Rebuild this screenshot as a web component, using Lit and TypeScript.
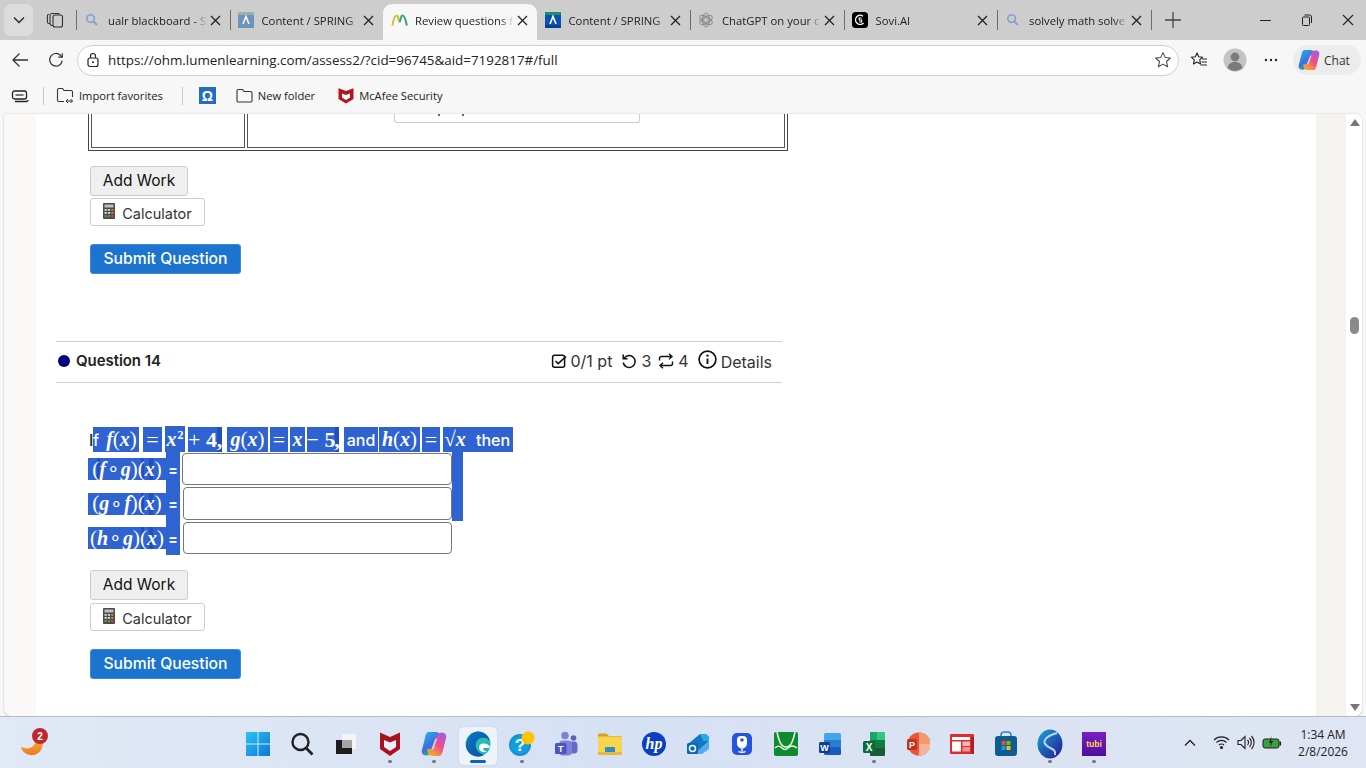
import { LitElement, html, css } from "lit";
import { customElement } from "lit/decorators.js";

const ico = {
  search: html`<svg width="14" height="14" viewBox="0 0 14 14" fill="none"><circle cx="5.6" cy="5.6" r="3.8" stroke="#7f9fd6" stroke-width="1.6"/><path d="M8.5 8.5L12 12" stroke="#7f9fd6" stroke-width="1.8"/></svg>`,
  lumenPale: html`<svg width="16" height="16" viewBox="0 0 16 16"><rect width="16" height="16" fill="#6d94bf"/><rect x="0" y="0" width="16" height="3" fill="#93b5a8"/><path d="M5 12L8 4.5 11 12" stroke="#fff" stroke-width="1.5" fill="none"/></svg>`,
  lumenDark: html`<svg width="16" height="16" viewBox="0 0 16 16"><rect width="16" height="16" fill="#0b50b5"/><rect width="16" height="3" fill="#1f8c72"/><rect y="13" width="16" height="3" fill="#0a3f96"/><path d="M5 12L8 4.5 11 12" stroke="#fff" stroke-width="1.6" fill="none"/></svg>`,
  lumenM: html`<svg width="17" height="13" viewBox="0 0 17 13" fill="none"><path d="M1.5 11.5C2.5 4 4.5 1.5 6 1.5S7.5 8 8.5 8" stroke="#c9c63a" stroke-width="2"/><path d="M8.5 8C9.5 8 9.5 1.5 11.5 1.5S14.8 6 15.8 11.5" stroke="#2fa56d" stroke-width="2"/></svg>`,
  gpt: html`<svg width="16" height="16" viewBox="0 0 16 16" fill="none" stroke="#8c8c8c" stroke-width="1"><circle cx="8" cy="8" r="2.4"/><ellipse cx="8" cy="8" rx="3.5" ry="7"/><ellipse cx="8" cy="8" rx="3.5" ry="7" transform="rotate(60 8 8)"/><ellipse cx="8" cy="8" rx="3.5" ry="7" transform="rotate(120 8 8)"/></svg>`,
  sovi: html`<svg width="16" height="16" viewBox="0 0 16 16" fill="none"><rect width="16" height="16" rx="3.5" fill="#000"/><path d="M11 4.2A4.6 4.6 0 1 0 11.5 11" stroke="#fff" stroke-width="1.4"/><path d="M9.6 6H7.2v2h2.4v2H7" stroke="#fff" stroke-width="1.1"/></svg>`,
  close: html`<svg width="11" height="11" viewBox="0 0 11 11" fill="none"><path d="M1 1l9 9M10 1l-9 9" stroke="#222" stroke-width="1.3"/></svg>`,
  chevron: html`<svg width="12" height="8" viewBox="0 0 12 8" fill="none"><path d="M1 1.5l5 5 5-5" stroke="#222" stroke-width="1.3"/></svg>`,
  workspaces: html`<svg width="18" height="18" viewBox="0 0 18 18" fill="none" stroke="#333" stroke-width="1.1"><rect x="7" y="4" width="9.5" height="12" rx="2"/><path d="M7 14.5H5.8a1.8 1.8 0 0 1-1.8-1.8V4.5a2 2 0 0 1 2-2h6a2 2 0 0 1 1.7 1"/><path d="M4 12.5H3a1.6 1.6 0 0 1-1.6-1.6V5a2 2 0 0 1 1.4-2"/></svg>`,
  back: html`<svg width="18" height="16" viewBox="0 0 18 16" fill="none"><path d="M17 8H2M8.5 1.5L2 8l6.5 6.5" stroke="#333" stroke-width="1.3"/></svg>`,
  reload: html`<svg width="16" height="16" viewBox="0 0 16 16" fill="none"><path d="M14.2 8.6A6.3 6.3 0 1 1 12.4 3.3L14 5" stroke="#333" stroke-width="1.2"/><path d="M14.3 1.2V5.2H10.3" stroke="#333" stroke-width="1.2"/></svg>`,
  lock: html`<svg width="14" height="16" viewBox="0 0 14 16" fill="none"><rect x="2" y="6" width="10" height="8.5" rx="2" stroke="#222" stroke-width="1.2"/><path d="M4.5 6V4a2.5 2.5 0 0 1 5 0v2" stroke="#222" stroke-width="1.2"/><circle cx="7" cy="10.2" r="1" fill="#222"/></svg>`,
  star: html`<svg width="18" height="18" viewBox="0 0 18 18" fill="none"><path d="M9 1.6l2.2 4.8 5.2.6-3.9 3.5 1.1 5.2L9 13.1l-4.6 2.6 1.1-5.2L1.6 7l5.2-.6z" stroke="#444" stroke-width="1.05" stroke-linejoin="round"/></svg>`,
  favs: html`<svg width="18" height="18" viewBox="0 0 18 18" fill="none"><path d="M7 2l1.7 3.7 4 .5-3 2.7.8 4L7 11l-3.5 1.9.8-4-3-2.7 4-.5z" stroke="#222" stroke-width="1.1" stroke-linejoin="round"/><path d="M12 8h5M11.5 11h5.5M10.5 14h6.5" stroke="#222" stroke-width="1.1"/></svg>`,
  avatar: html`<svg width="24" height="24" viewBox="0 0 24 24"><circle cx="12" cy="12" r="11.5" fill="#c4c4c4"/><circle cx="12" cy="9" r="4.4" fill="#7b7b7b"/><path d="M4.5 20c1-4.6 4-6 7.5-6s6.5 1.4 7.5 6a11 11 0 0 1-15 0z" fill="#7b7b7b"/></svg>`,
  more: html`<svg width="14" height="4" viewBox="0 0 14 4"><circle cx="2" cy="2" r="1.2" fill="#222"/><circle cx="7" cy="2" r="1.2" fill="#222"/><circle cx="12" cy="2" r="1.2" fill="#222"/></svg>`,
  reading: html`<svg width="18" height="14" viewBox="0 0 18 14" fill="none"><rect x="1.5" y="2" width="14" height="8" rx="2" stroke="#222" stroke-width="1.3"/><path d="M4 12.5h11.5a1.5 1.5 0 0 0 1.5-1.5" stroke="#222" stroke-width="1.3"/><path d="M4.5 6h8" stroke="#222" stroke-width="1.2"/></svg>`,
  importFav: html`<svg width="18" height="17" viewBox="0 0 18 17" fill="none"><path d="M8 14.5H3A1.5 1.5 0 0 1 1.5 13V3A1.5 1.5 0 0 1 3 1.5h3.5L8 3.5h7A1.5 1.5 0 0 1 16.5 5v5" stroke="#333" stroke-width="1.1"/><path d="M10 14h6.5M12 12l-2 2 2 2M14.5 12l2 2-2 2" stroke="#333" stroke-width="1"/></svg>`,
  omega: html`<div class="omega">Ω</div>`,
  folder: html`<svg width="17" height="15" viewBox="0 0 17 15" fill="none"><path d="M1 3A1.5 1.5 0 0 1 2.5 1.5h4L8 3.5h6.5A1.5 1.5 0 0 1 16 5v7.5a1.5 1.5 0 0 1-1.5 1.5h-12A1.5 1.5 0 0 1 1 12.5z" stroke="#333" stroke-width="1.1"/></svg>`,
  mcafee: html`<svg width="16" height="17" viewBox="0 0 16 17"><path d="M0.5 1.2L8 4 15.5 1.2V12L8 16.5 0.5 12z" fill="#b3141d"/><path d="M4 6.5L8 8l4-1.5v4L8 13l-4-2.500z" fill="#fff"/></svg>`,
  check: html`<svg width="16" height="16" viewBox="0 0 16 16" fill="none"><rect x="1.6" y="2.2" width="12" height="12" rx="2" stroke="#111" stroke-width="1.5"/><path d="M4.500 8l2.700 2.700L15 3.500" stroke="#111" stroke-width="1.6"/></svg>`,
  undo: html`<svg width="16" height="16" viewBox="0 0 16 16" fill="none"><path d="M3 5.300A6 6 0 1 1 2.200 9.500" stroke="#111" stroke-width="1.5"/><path d="M2.200 1.500V5.800H6.500" stroke="#111" stroke-width="1.5"/></svg>`,
  retry: html`<svg width="16" height="16" viewBox="0 0 16 16" fill="none"><path d="M1.500 7.500V5.500A2 2 0 0 1 3.500 3.500H14M11 .8L14 3.500 11 6.200" stroke="#111" stroke-width="1.4"/><path d="M14.500 8.500v2a2 2 0 0 1-2 2H2M5 9.800L2 12.500l3 2.700" stroke="#111" stroke-width="1.4"/></svg>`,
  info: html`<svg width="19" height="19" viewBox="0 0 19 19" fill="none"><circle cx="9.500" cy="9.500" r="8.400" stroke="#111" stroke-width="1.7"/><circle cx="9.500" cy="5.600" r="1.200" fill="#111"/><path d="M9.500 8.500v5.500" stroke="#111" stroke-width="1.900"/></svg>`,
  calc: html`<svg width="12" height="16" viewBox="0 0 12 16"><rect width="12" height="16" rx="1" fill="#4a4a4a"/><rect x="1.500" y="1.500" width="9" height="3" fill="#b9c2c0"/><g fill="#d8d8d8"><rect x="1.500" y="6" width="2.300" height="1.800"/><rect x="4.800" y="6" width="2.300" height="1.800"/></g><rect x="8.200" y="6" width="2.300" height="1.800" fill="#d9822b"/><g fill="#d8d8d8"><rect x="1.500" y="9" width="2.300" height="1.800"/><rect x="4.800" y="9" width="2.300" height="1.800"/></g><rect x="8.200" y="9" width="2.300" height="1.800" fill="#d9822b"/><g fill="#4d9a5b"><rect x="1.500" y="12" width="2.300" height="2.300"/><rect x="4.800" y="12" width="2.300" height="2.300"/></g><rect x="8.200" y="12" width="2.300" height="2.300" fill="#c64a2b"/></svg>`,
};

const copilot = (s: number) => html`<svg width=${s} height=${s} viewBox="0 0 24 24"><defs><linearGradient id="cpa${s}" x1="0" y1="0" x2=".6" y2="1"><stop offset="0" stop-color="#2bb5ea"/><stop offset=".6" stop-color="#3a6fe0"/><stop offset="1" stop-color="#35c07a"/></linearGradient><linearGradient id="cpb${s}" x1=".2" y1="1" x2=".8" y2="0"><stop offset="0" stop-color="#f7b21f"/><stop offset=".5" stop-color="#ee4f86"/><stop offset="1" stop-color="#a25be0"/></linearGradient></defs><path d="M7 1h7c1.500 0 2.500.8 3 2l1.500 4.500h-5L9.500 19c-.6 2-2 3.500-4 3.500H4.500C1.500 22.500 0 20 1 17L4 5C4.600 2.500 5.500 1 7 1z" fill="url(#cpa${s})"/><path d="M17 23h-7c-1.500 0-2.500-.8-3-2l-1.500-4.500h5L14.500 5c.6-2 2-3.500 4-3.500h1C22.500 1.500 24 4 23 7L20 19c-.6 2.500-1.500 4-3 4z" fill="url(#cpb${s})"/><path d="M9.500 17l3.500-10h2L11.500 17z" fill="#fff" opacity=".55"/></svg>`;

const bar = {
  moon: html`<svg width="26" height="28" viewBox="0 0 26 28"><defs><linearGradient id="mo" x1="0" y1="0" x2="0" y2="1"><stop offset="0" stop-color="#f8c54a"/><stop offset="1" stop-color="#ec7a1c"/></linearGradient></defs><path d="M18 5c6 2 7 9 5 14-2 5-7 8-12 7-5-1-8-4-9-8 5 2 9 2 12-1 3-3 4-7 4-12z" fill="url(#mo)"/></svg>`,
  win: html`<svg width="24" height="24" viewBox="0 0 24 24"><defs><linearGradient id="wi" x1="0" y1="0" x2="1" y2="1"><stop offset="0" stop-color="#29c3f4"/><stop offset="1" stop-color="#0a78d4"/></linearGradient></defs><path d="M0 0h11.500v11.500H0zM12.500 0H24v11.500H12.500zM0 12.500h11.500V24H0zM12.500 12.500H24V24H12.500z" fill="url(#wi)"/></svg>`,
  search: html`<svg width="24" height="24" viewBox="0 0 24 24" fill="none"><circle cx="10.500" cy="10" r="8" stroke="#222" stroke-width="2.400"/><path d="M16 16l6.500 6.500" stroke="#222" stroke-width="2.800"/></svg>`,
  task: html`<svg width="24" height="24" viewBox="0 0 24 24"><rect x="8" y="2" width="14" height="15" fill="#f4f4f4"/><rect x="2" y="8" width="16" height="14" fill="#1c1c1c"/><rect x="8" y="8" width="10" height="8" fill="#a5a5a5"/></svg>`,
  mcafee: html`<svg width="22" height="26" viewBox="0 0 22 26"><path d="M1 1.500L11 6 21 1.500V18L11 25 1 18z" fill="#a6141c"/><path d="M5 9L11 11.500 17 9v7L11 20 5 16z" fill="#eef"/></svg>`,
  copilot: copilot(26),
  edge: html`<svg width="26" height="26" viewBox="0 0 26 26"><defs><linearGradient id="ed1" x1="0" y1="0" x2="1" y2="1"><stop offset="0" stop-color="#3fd28b"/><stop offset="1" stop-color="#1aa9c9"/></linearGradient><linearGradient id="ed2" x1="0" y1="0" x2="1" y2="1"><stop offset="0" stop-color="#0c75c7"/><stop offset="1" stop-color="#0a4ea3"/></linearGradient></defs><circle cx="13" cy="13" r="12.500" fill="url(#ed1)"/><path d="M1 13C2 5 8 .5 13 .5c6 0 11 4.500 12 9.500-2-3-6-4-9-3-5 1.500-7 7-4 12 1.500 2.500 4 4 7 5-1 .8-4 1.500-6 1.500C6 25.500 .5 20 1 13z" fill="url(#ed2)"/><path d="M14 16.500c0-2.500 2-4 4.500-4s6 1.500 6.500 3.500c0 .8-2 1-3 1h-3.500c-1 1.500 1 3 3.500 3.500-2.500 1.500-8 .5-8-4z" fill="#fff"/></svg>`,
  help: html`<svg width="28" height="26" viewBox="0 0 28 26"><circle cx="12" cy="14" r="11" fill="#1591cf"/><circle cx="12" cy="14" r="9" fill="#11a0dc"/><text x="12" y="20" text-anchor="middle" font-family="Liberation Sans" font-weight="700" font-size="17" fill="#fff">?</text><circle cx="20" cy="7" r="6.500" fill="#fdc300"/></svg>`,
  teams: html`<svg width="24" height="26" viewBox="0 0 24 26"><circle cx="11" cy="4.500" r="3.800" fill="#7b83d8"/><circle cx="19.500" cy="7" r="2.800" fill="#5b62b8"/><rect x="15" y="10.500" width="8.500" height="12" rx="3.500" fill="#6369c4"/><rect x="5" y="9.500" width="13" height="15" rx="4" fill="#7b83d8"/><rect x="1" y="12" width="11.500" height="11" rx="1.500" fill="#4b53bc"/><text x="6.700" y="21" text-anchor="middle" font-family="Liberation Sans" font-weight="700" font-size="9" fill="#fff">T</text></svg>`,
  folder: html`<svg width="26" height="24" viewBox="0 0 26 24"><path d="M1 3a1.500 1.500 0 0 1 1.500-1.500h7L12 4h12.500v2H1z" fill="#d59f1e"/><rect x="1" y="4.500" width="24" height="18.500" fill="#f7d44e"/><rect x="8" y="15" width="10" height="6" rx="1" fill="#2a8fc9"/><rect x="1" y="20" width="24" height="3" fill="#e8b938"/></svg>`,
  hp: html`<svg width="24" height="24" viewBox="0 0 24 24"><circle cx="12" cy="12" r="12" fill="#0a3fc0"/><text x="12" y="17" text-anchor="middle" font-family="Liberation Serif" font-style="italic" font-weight="700" font-size="16" fill="#fff">hp</text></svg>`,
  outlook: html`<svg width="24" height="24" viewBox="0 0 24 24"><path d="M2 12L14 2h6l3 3v4L11 20z" fill="#1576c4"/><path d="M11 20l12-11v8l-7 5h-5z" fill="#4fb0e8"/><path d="M14 2h6l3 3v4h-6z" fill="#28a8ea"/><rect x="1" y="11" width="11" height="11" rx="1.500" fill="#0a68b5"/><circle cx="6.500" cy="16.500" r="3" fill="none" stroke="#fff" stroke-width="1.500"/></svg>`,
  phone: html`<svg width="22" height="24" viewBox="0 0 22 24"><rect x="1" y="1" width="20" height="22" rx="5" fill="#2554dc"/><rect x="6" y="4" width="10" height="11" rx="4" fill="#fff"/><path d="M7 12a4 4 0 0 0 8 0M11 16v3M7.500 19.500c1.500 1 5.500 1 7 0" stroke="#fff" stroke-width="1.400" fill="none"/><circle cx="11" cy="8" r="1.800" fill="#2554dc"/></svg>`,
  graph: html`<svg width="26" height="26" viewBox="0 0 26 26"><rect x="1" y="1" width="24" height="24" rx="2" fill="#0f8a2f"/><path d="M4 1C6 10 8 16 13 16S20 10 22 1" stroke="#e8ffe8" stroke-width="1.500" fill="none"/><path d="M2 17c3-3 5-2 7 0s4 2 6 0 5-3 9 0" stroke="#e8ffe8" stroke-width="1.500" fill="none"/></svg>`,
  word: html`<svg width="24" height="24" viewBox="0 0 24 24"><rect x="6" y="1" width="17" height="7.500" rx="1.500" fill="#41a5ee"/><rect x="6" y="8" width="17" height="7.500" fill="#2b7cd3"/><rect x="6" y="15" width="17" height="8" rx="1.500" fill="#185abd"/><rect x="1" y="10" width="11" height="11" rx="1.500" fill="#103f91"/><text x="6.500" y="19" text-anchor="middle" font-family="Liberation Sans" font-weight="700" font-size="9" fill="#fff">W</text></svg>`,
  excel: html`<svg width="24" height="26" viewBox="0 0 24 26"><path d="M8 1h7v8H8z" fill="#21a366"/><path d="M15 1h7a1 1 0 0 1 1 1v7h-8z" fill="#33c481"/><rect x="8" y="9" width="15" height="8" fill="#107c41"/><path d="M8 17h15v7a1 1 0 0 1-1 1H9a1 1 0 0 1-1-1z" fill="#185c37"/><rect x="1" y="10" width="12" height="12" rx="1.500" fill="#0e6a38"/><text x="7" y="19.500" text-anchor="middle" font-family="Liberation Sans" font-weight="700" font-size="10" fill="#fff">X</text></svg>`,
  ppt: html`<svg width="24" height="26" viewBox="0 0 24 26"><circle cx="13" cy="13" r="11.500" fill="#e8553a"/><path d="M13 1.500A11.500 11.500 0 0 1 24.500 13H13z" fill="#f79a6a"/><path d="M13 13h11.500A11.500 11.500 0 0 1 13 24.500z" fill="#f6b49a"/><rect x="1" y="8" width="10" height="11" rx="1.500" fill="#c4321c"/><text x="6" y="17" text-anchor="middle" font-family="Liberation Sans" font-weight="700" font-size="9" fill="#fff">P</text></svg>`,
  news: html`<svg width="24" height="20" viewBox="0 0 24 20"><rect width="24" height="20" rx="1" fill="#e02b2f"/><rect x="21" y="3" width="3" height="17" fill="#a92125"/><rect x="2" y="3" width="18" height="3" fill="#fff"/><rect x="2" y="7.500" width="9" height="10" fill="#fff"/><rect x="12.500" y="7.500" width="7.500" height="4.500" fill="#f8b7b7"/><rect x="12.500" y="13" width="7.500" height="4.500" fill="#f29393"/></svg>`,
  store: html`<svg width="24" height="26" viewBox="0 0 24 26"><path d="M7 6V4a3 3 0 0 1 3-3h4a3 3 0 0 1 3 3v2" stroke="#2c86c8" stroke-width="1.600" fill="none"/><rect x="1" y="5" width="22" height="20" rx="3" fill="#0f5d8f"/><rect x="7.500" y="10" width="4" height="4" fill="#f25022"/><rect x="12.500" y="10" width="4" height="4" fill="#7fba00"/><rect x="7.500" y="15" width="4" height="4" fill="#00a4ef"/><rect x="12.500" y="15" width="4" height="4" fill="#ffb900"/></svg>`,
  solid: html`<svg width="26" height="30" viewBox="0 0 26 30"><defs><linearGradient id="so" x1="0" y1="0" x2="1" y2="1"><stop offset="0" stop-color="#17a7d9"/><stop offset="1" stop-color="#24158f"/></linearGradient></defs><ellipse cx="13" cy="15" rx="12.500" ry="14.500" fill="url(#so)"/><path d="M20 4C12 6 4 11 9 16s10 3 9 10" stroke="#dceaff" stroke-width="2" fill="none" opacity=".85"/></svg>`,
  tubi: html`<div class="tubi">tubi</div>`,
};

const tabs = [
  { t: "ualr blackboard - S", i: ico.search },
  { t: "Content / SPRING", i: ico.lumenPale },
  { t: "Review questions f", i: ico.lumenM, active: true },
  { t: "Content / SPRING", i: ico.lumenDark },
  { t: "ChatGPT on your c", i: ico.gpt },
  { t: "Sovi.AI", i: ico.sovi },
  { t: "solvely math solve", i: ico.search },
];

const taskIcons = [
  { i: bar.win }, { i: bar.search }, { i: bar.task }, { i: bar.mcafee, dot: 1 }, { i: bar.copilot, dot: 1 },
  { i: bar.edge, on: 1 }, { i: bar.help, dot: 1 }, { i: bar.teams }, { i: bar.folder }, { i: bar.hp }, { i: bar.outlook },
  { i: bar.phone }, { i: bar.graph }, { i: bar.word }, { i: bar.excel, dot: 1 }, { i: bar.ppt }, { i: bar.news },
  { i: bar.store }, { i: bar.solid, dot: 1 }, { i: bar.tubi, dot: 1 },
];

type Seg = [number, number, any, string];
const fn = (n: string) => html`${n}<i class="up">(</i>x<i class="up">)</i>`;
const row1: Seg[] = [
  [89, 93, "I", "txt plain"],
  [93, 104, "f", "txt l"],
  [104, 139, fn("f"), "mi"],
  [143, 162, "=", "mo"],
  [165, 185, html`x<sup>2</sup>`, "mi hi"],
  [188, 217, html`+ <b>4</b>`, "mo"],
  [217, 222, html`<b>,</b>`, "mo dark"],
  [227, 268, fn("g"), "mi"],
  [270, 288, "=", "mo"],
  [290, 305, "x", "mi"],
  [307, 335, html`− <b>5</b>`, "mo"],
  [335, 339, html`<b>,</b>`, "mo dark"],
  [344, 378, "and", "txt"],
  [379, 420, fn("h"), "mi"],
  [422, 440, "=", "mo"],
  [443, 467, html`<i class="up">√</i>x`, "mi"],
  [467, 513, "then", "txt pl"],
];
const comp = (a: string, b: string) => html`<i class="up">(</i>${a}<i class="up op">∘</i>${b}<i class="up">)(</i>x<i class="up">)</i>`;
const rows = [
  { f: comp("f", "g"), bar: true, c: "r2" },
  { f: comp("g", "f"), bar: true, c: "r3" },
  { f: comp("h", "g"), bar: false, c: "r4" },
];

@customElement("app-root")
export class AppRoot extends LitElement {
  static styles = css`
    :host { display: block; width: 1366px; height: 768px; overflow: hidden; font-family: "Open Sans", "Noto Sans", sans-serif; }
    .app { display: flex; flex-direction: column; height: 768px; background: #f7f7f7; }
    .strip { height: 40px; background: #cdcdcd; display: flex; align-items: stretch; flex: none; }
    .tabfold { width: 29px; height: 32px; margin: 4px 0 0 4px; background: #dcdcdc; border-radius: 7px; display: flex; align-items: center; justify-content: center; }
    .wsp { width: 43px; display: flex; align-items: center; justify-content: center; }
    .tab { width: 153.5px; flex: none; position: relative; display: flex; align-items: center; font-size: 11.300px; color: #222; box-sizing: border-box; }
    .tab::before { content: ""; position: absolute; left: 0; top: 10px; bottom: 10px; width: 1px; background: #6d6d6d; }
    .tab.noline::before { display: none; }
    .tab.active { background: #f7f7f7; margin-top: 4px; padding-bottom: 4px; border-radius: 9px 9px 0 0; }
    .tab .fi { width: 32px; display: flex; justify-content: center; flex: none; }
    .tab .tt { width: 99px; white-space: nowrap; overflow: hidden; -webkit-mask-image: linear-gradient(90deg, #000 86%, transparent 100%); mask-image: linear-gradient(90deg, #000 86%, transparent 100%); }
    .tab .x { width: 16px; display: flex; justify-content: center; }
    .plus { width: 44px; margin: 10px 0; box-sizing: border-box; border-left: 1px solid #6d6d6d; display: flex; align-items: center; justify-content: center; }
    .spacer { flex: 1; }
    .winc { display: flex; align-items: center; padding-right: 12px; gap: 30px; }
    .toolbar { height: 40px; flex: none; display: flex; align-items: center; padding-left: 11px; }
    .tb-ic { display: flex; justify-content: center; align-items: center; }
    .tb-ic.b { width: 18px; } .tb-ic.r { width: 54px; }
    .addr { width: 1102px; height: 31px; margin-left: -6px; box-sizing: border-box; background: #fff; border: 1px solid #cfcfcf; border-radius: 16px; display: flex; align-items: center; padding: 0 6px 0 8px; font-size: 13.400px; color: #222; }
    .addr .lk { width: 14px; display: flex; margin-right: 8px; }
    .addr .url { flex: 1; }
    .tr { display: flex; align-items: center; }
    .fav { width: 40px; display: flex; justify-content: center; }
    .fav.n { width: 32px; }
    .chat { height: 30px; width: 68px; margin-left: 2px; background: #ececec; border-radius: 15px; display: flex; align-items: center; padding-left: 5px; gap: 4px; box-sizing: border-box; font-size: 12px; color: #333; }
    .bm { height: 33px; padding-bottom: 2px; box-sizing: border-box; flex: none; display: flex; align-items: center; font-size: 11.200px; color: #222; position: relative; }
    .bm .i { display: flex; }
    .bm .sep { width: 1px; height: 18px; background: #c9c9c9; }
    .m11 { margin-left: 11px; } .m12 { margin-left: 12px; } .m14 { margin-left: 14px; } .m16 { margin-left: 16px; } .m19 { margin-left: 19px; } .m20 { margin-left: 20px; } .m23 { margin-left: 23px; } .m5 { margin-left: 5px; }
    .omega { width: 17px; height: 17px; background: #1f6fc4; color: #fff; font-size: 14px; font-weight: 600; display: flex; align-items: center; justify-content: center; font-family: "Liberation Sans", sans-serif; }
    .viewport { flex: 1; display: flex; padding: 0 4px; min-height: 0; background: #f7f7f7; }
    .page { flex: 1; display: flex; overflow: hidden; border-radius: 0 8px 8px 8px; background: #fff; border-top: 1px solid #ebebeb; box-shadow: 0 1px 2px #bbb; }
    .gutter { width: 32px; background: #faf9f7; flex: none; }
    .gutter.r { width: 30px; background: #f4f3f0; }
    main { width: 1228px; padding-left: 52px; flex: none; background: #fff; font-family: "Inter", "Liberation Sans", sans-serif; color: #212529; }
    .scroll { width: 16px; flex: none; background: #fff; position: relative; }
    .arrow-up { position: absolute; left: 3.500px; top: 5px; width: 0; height: 0; border-left: 5px solid transparent; border-right: 5px solid transparent; border-bottom: 7px solid #777; }
    .arrow-dn { position: absolute; left: 3.500px; bottom: 5px; width: 0; height: 0; border-left: 5px solid transparent; border-right: 5px solid transparent; border-top: 7px solid #777; }
    .thumb { position: absolute; left: 4px; top: 203px; width: 9px; height: 17px; border-radius: 5px; background: #8a8a8a; }

    .tbl { width: 700px; height: 37px; box-sizing: border-box; border: 1px solid #444; border-top: 0; padding: 0 2px 2px 2px; display: flex; gap: 2px; }
    .cell { box-sizing: border-box; border: 1px solid #555; border-top: 0; }
    .cell.a { width: 154px; }
    .cell.b { flex: 1; position: relative; }
    .peek { width: 246px; height: 9px; margin-left: 146px; box-sizing: border-box; border: 1px solid #ccc; border-top: 0; border-radius: 0 0 3px 3px; position: relative; }
    .peek i { position: absolute; top: 0; width: 2px; height: 2px; background: #666; }
    .peek i.p1 { left: 43px; } .peek i.p2 { left: 67px; }

    .btn { display: flex; align-items: center; justify-content: center; box-sizing: border-box; margin-left: 2px; border-radius: 3px; }
    .add { width: 98px; height: 30px; padding-bottom: 2px; background: #efefef; border: 1px solid #ccc; color: #111; font-size: 15.500px; font-weight: 400; }
    .calc { width: 115px; height: 28px; padding-top: 2px; background: #fff; border: 1px solid #ccc; color: #333; font-size: 14.500px; gap: 7px; }
    .calc svg { margin-bottom: 4px; }
    .submit { width: 151px; height: 30px; padding-bottom: 2px; background: #1c74cf; border: 1px solid #3d8ad8; color: #fff; font-size: 15.700px; font-weight: 450; }
    .top2 { margin-top: 2px; } .top3 { margin-top: 3px; } .top15 { margin-top: 15px; } .top18 { margin-top: 18px; }

    .qh { width: 726px; height: 42px; margin-left: -32px; margin-top: 67px; box-sizing: border-box; border-top: 1px solid #cfcfcf; border-bottom: 1px solid #cfcfcf; display: flex; align-items: center; padding: 0 10px 2px 2px; }
    .dot { width: 12px; height: 12px; border-radius: 50%; background: #00007e; margin-right: 6px; flex: none; }
    .qt { font-size: 15px; font-weight: 600; color: #222; letter-spacing: -0.060px; margin-bottom: 2px; }
    .qm { margin-left: auto; display: flex; align-items: center; font-size: 16px; color: #333; }
    .qm span { display: inline-flex; }
    .qm .g1 { margin-right: 9px; } .qm .g2 { margin-right: 7px; } .qm .g3 { margin-right: 9px; }
    .qm .ig { margin-right: 4px; align-items: center; }
    .qm .ig.c { margin-right: 3px; }
    .qm .ig.n { margin-bottom: 3px; }
    .qm .dt { font-size: 16px; margin-top: 2px; }

    .mrow1 { display: flex; height: 25px; margin-top: 44px; margin-left: 1px; }
    .seg { flex: none; display: flex; align-items: center; justify-content: center; background: #2f63d1; color: #fff; white-space: pre; box-sizing: border-box; height: 100%; }
    .seg.plain { background: transparent; color: #212529; justify-content: flex-start; }
    .seg.txt { font-size: 16px; font-family: "Inter", sans-serif; font-weight: 500; }
    .seg.l { justify-content: flex-start; }
    .seg.pl { padding-left: 6px; }
    .seg.mi { font: italic 700 20px "Liberation Serif", serif; }
    .seg.mo { font: 400 22px "Liberation Serif", serif; }
    .seg.dark { background: #1f4fc0; }
    .seg.hi { margin-top: -1px; height: 26px; }
    .seg sup { font: 700 12px "Liberation Serif", serif; position: relative; top: -4px; vertical-align: baseline; margin-left: 1px; }
    .up { font-style: normal; font-weight: 400; font-size: 21px; }
    .up.op { font-size: 20px; margin: 0 1px; }
    .mrow { display: flex; align-items: center; }
    .mrow.r2 { height: 34px; } .mrow.r3 { height: 35px; } .mrow.r4 { height: 34px; }
    .mf { flex: none; width: 78px; height: 22px; color: #fff; font: italic 700 20px "Liberation Serif", serif; display: flex; align-items: center; justify-content: center; white-space: pre;
      background: linear-gradient(90deg, #2f63d1 0 53px, #1f4fc0 53px 56px, #2f63d1 56px 61px, #1f4fc0 61px 65px, #2f63d1 65px); }
    .r2 .mf { background: linear-gradient(90deg, #2f63d1 0 9px, #1f4fc0 9px 12px, #2f63d1 12px 53px, #1f4fc0 53px 56px, #2f63d1 56px 61px, #1f4fc0 61px 65px, #2f63d1 65px); }
    .eq { flex: none; width: 14px; height: 100%; background: #2f63d1; color: #fff; font: 700 14px "Inter", sans-serif; display: flex; align-items: center; justify-content: center; }
    .inp { flex: none; box-sizing: border-box; width: 270px; height: 32px; margin-left: 2px; background: #fff; border: 1px solid #777; border-radius: 4px; }
    .r3 .inp { width: 269px; margin-left: 3px; height: 33px; }
    .r4 .inp { width: 269px; margin-left: 3px; }
    .blue { flex: none; width: 11px; height: 100%; background: #2f63d1; }

    .task { height: 52px; flex: none; background: linear-gradient(90deg, #e0e9f5, #d6e1f4 45%, #dfe5f2 100%); display: flex; align-items: center; border-top: 1px solid #b4bac6; box-sizing: border-box; position: relative; }
    .moon { width: 32px; margin-left: 18px; padding-left: 1px; box-sizing: border-box; position: relative; display: flex; align-items: center; height: 100%; }
    .badge { position: absolute; left: 14px; top: 11px; width: 16px; height: 16px; border-radius: 50%; background: #c0272d; color: #fff; font-size: 10px; font-weight: 700; display: flex; align-items: center; justify-content: center; font-family: "Liberation Sans", sans-serif; }
    .icons { display: flex; margin-left: 186px; height: 100%; }
    .ti { width: 44px; height: 100%; display: flex; align-items: center; justify-content: center; position: relative; padding-top: 3px; box-sizing: border-box; }
    .ti.on::before { content: ""; position: absolute; left: 3px; right: 3px; top: 10px; bottom: 3px; background: #eef2fa; border-radius: 4px; box-shadow: 0 0 1px #aab; }
    .ti > * { position: relative; }
    .ti .d { position: absolute; bottom: 5px; left: 50%; margin-left: -2px; width: 4px; height: 3px; border-radius: 2px; background: #777; }
    .ti.on .d { width: 16px; margin-left: -8px; background: #0a64c8; }
    .tubi { width: 24px; height: 24px; background: linear-gradient(#7a1fc0, #4d0f9e); color: #ffd84a; font: 700 8.500px "Liberation Sans", sans-serif; display: flex; align-items: center; justify-content: center; }
    .tray { margin-left: auto; display: flex; align-items: center; height: 100%; padding-right: 12px; }
    .tray .a { margin-right: 17px; } .tray .b { margin-right: 7px; }
    .clock { font-size: 12px; color: #222; text-align: center; line-height: 17px; width: 62px; margin-left: 10px; }
  `;

  private segs(list: Seg[]) {
    let prev = list[0][0];
    return list.map(([a, b, t, c]) => {
      const ml = a - prev;
      prev = b;
      return html`<span class="seg ${c}" style="margin-left:${ml}px;width:${b - a}px">${t}</span>`;
    });
  }

  private controls(mt1: string) {
    return html`
      <div class="btn add top15">Add Work</div>
      <div class="btn calc ${mt1}">${ico.calc}<span>Calculator</span></div>
      <div class="btn submit top18">Submit Question</div>`;
  }

  render() {
    return html`<div class="app">
      <div class="strip">
        <div class="tabfold">${ico.chevron}</div>
        <div class="wsp">${ico.workspaces}</div>
        ${tabs.map((t, i) => html`<div class="tab ${t.active ? "active" : ""} ${t.active || tabs[i - 1]?.active ? "noline" : ""}">
          <div class="fi">${t.i}</div><div class="tt">${t.t}</div><div class="x">${ico.close}</div>
        </div>`)}
        <div class="plus">
          <svg width="16" height="16" viewBox="0 0 16 16"><path d="M8 0v16M0 8h16" stroke="#444" stroke-width="1.300"/></svg>
        </div>
        <div class="spacer"></div>
        <div class="winc">
          <svg width="11" height="11" viewBox="0 0 11 11"><path d="M0 5.500h11" stroke="#222" stroke-width="1"/></svg>
          <svg width="11" height="12" viewBox="0 0 11 12" fill="none" stroke="#222"><rect x="1.500" y="3" width="7" height="8.500" rx="1"/><path d="M3.500 1h5a2 2 0 0 1 2 2v6"/></svg>
          <svg width="12" height="12" viewBox="0 0 12 12"><path d="M1 1l10 10M11 1L1 11" stroke="#222" stroke-width="1.100"/></svg>
        </div>
      </div>

      <div class="toolbar">
        <div class="tb-ic b">${ico.back}</div>
        <div class="tb-ic r">${ico.reload}</div>
        <div class="addr">
          <div class="lk">${ico.lock}</div>
          <div class="url">https://ohm.lumenlearning.com/assess2/?cid=96745&aid=7192817#/full</div>
          ${ico.star}
        </div>
        <div class="tr">
          <div class="fav">${ico.favs}</div>
          <div class="fav n">${ico.avatar}</div>
          <div class="fav">${ico.more}</div>
          <div class="chat">${copilot(22)}<span>Chat</span></div>
        </div>
      </div>

      <div class="bm">
        <div class="i m11">${ico.reading}</div>
        <div class="sep m14"></div>
        <div class="i m12">${ico.importFav}</div>
        <span class="m5">Import favorites</span>
        <div class="sep m19"></div>
        <div class="i m16">${ico.omega}</div>
        <div class="i m20">${ico.folder}</div>
        <span class="m5">New folder</span>
        <div class="i m23">${ico.mcafee}</div>
        <span class="m5">McAfee Security</span>
      </div>

      <div class="viewport">
        <div class="page">
          <div class="gutter"></div>
          <main>
            <div class="tbl">
              <div class="cell a"></div>
              <div class="cell b"><div class="peek"><i class="p1"></i><i class="p2"></i></div></div>
            </div>
            ${this.controls("top2")}
            <div class="qh">
              <div class="dot"></div>
              <div class="qt">Question 14</div>
              <div class="qm">
                <span class="ig c">${ico.check}</span><span class="g1">0/1 pt</span>
                <span class="ig">${ico.undo}</span><span class="g2">3</span>
                <span class="ig">${ico.retry}</span><span class="g3">4</span>
                <span class="ig n">${ico.info}</span><span class="dt">Details</span>
              </div>
            </div>
            <div class="mrow1">${this.segs(row1)}</div>
            ${rows.map((r) => html`<div class="mrow ${r.c}">
              <div class="mf">${r.f}</div>
              <div class="eq">=</div>
              <div class="inp"></div>
              ${r.bar ? html`<div class="blue"></div>` : ""}
            </div>`)}
            ${this.controls("top3")}
          </main>
          <div class="gutter r"></div>
          <div class="scroll"><div class="arrow-up"></div><div class="thumb"></div><div class="arrow-dn"></div></div>
        </div>
      </div>

      <div class="task">
        <div class="moon">${bar.moon}<div class="badge">2</div></div>
        <div class="icons">
          ${taskIcons.map((t: any) => html`<div class="ti ${t.on ? "on" : ""}">${t.i}${t.dot || t.on ? html`<div class="d"></div>` : ""}</div>`)}
        </div>
        <div class="tray">
          <svg class="a" width="12" height="8" viewBox="0 0 12 8" fill="none"><path d="M1 6.500L6 1.500l5 5" stroke="#222" stroke-width="1.300"/></svg>
          <svg class="b" width="17" height="15" viewBox="0 0 17 15" fill="none" stroke="#222" stroke-width="1.100"><path d="M1 5a10.500 10.500 0 0 1 15 0M3.500 7.500a7 7 0 0 1 10 0M6 10a3.500 3.500 0 0 1 5 0"/><circle cx="8.500" cy="12.500" r="1" fill="#222"/></svg>
          <svg class="b" width="18" height="15" viewBox="0 0 18 15" fill="none" stroke="#222" stroke-width="1.100"><path d="M1 5.500h3l4-4v12l-4-4H1z"/><path d="M10.500 5a3.500 3.500 0 0 1 0 5M12.500 3a6.500 6.500 0 0 1 0 9M14.500 1a9.500 9.500 0 0 1 0 13"/></svg>
          <svg width="20" height="14" viewBox="0 0 20 14" fill="none"><rect x="1" y="3" width="16" height="9" rx="2" fill="#3aa040" stroke="#222"/><rect x="17.500" y="5.500" width="1.600" height="4" fill="#222"/><path d="M9.500 0L7 7h2l-1 5 3-7H9z" fill="#222"/></svg>
          <div class="clock">1:34 AM<br />2/8/2026</div>
        </div>
      </div>
    </div>`;
  }
}
